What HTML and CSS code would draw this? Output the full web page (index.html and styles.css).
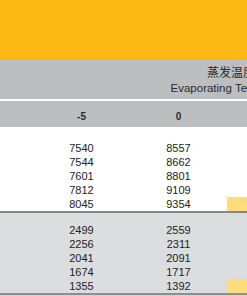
FILE: index.html
```html
<!DOCTYPE html>
<html lang="zh">
<head>
<meta charset="utf-8">
<link rel="stylesheet" href="styles.css">
</head>
<body>
<div class="page">
  <div class="banner"></div>
  <div class="thead">
    <div class="title">
      <div class="zh">蒸发温度</div>
      <div class="en">Evaporating Temperature</div>
    </div>
  </div>
  <div class="grid colhead">
    <span></span><span>-5</span><span>0</span><span></span>
  </div>
  <div class="section sec-white">
    <div class="grid row"><span></span><span>7540</span><span>8557</span><span></span></div>
    <div class="grid row"><span></span><span>7544</span><span>8662</span><span></span></div>
    <div class="grid row"><span></span><span>7601</span><span>8801</span><span></span></div>
    <div class="grid row"><span></span><span>7812</span><span>9109</span><span></span></div>
    <div class="grid row"><span></span><span>8045</span><span>9354</span><span class="hl"></span></div>
  </div>
  <div class="section sec-gray">
    <div class="grid row"><span></span><span>2499</span><span>2559</span><span></span></div>
    <div class="grid row"><span></span><span>2256</span><span>2311</span><span></span></div>
    <div class="grid row"><span></span><span>2041</span><span>2091</span><span></span></div>
    <div class="grid row"><span></span><span>1674</span><span>1717</span><span></span></div>
    <div class="grid row"><span></span><span>1355</span><span>1392</span><span class="hl"></span></div>
  </div>
</div>
</body>
</html>
```
FILE: styles.css
```css
html, body {
  margin: 0;
  padding: 0;
}
body {
  width: 247px;
  height: 296px;
  overflow: hidden;
  background: #d4d4d6;
  font-family: "Liberation Sans", Arial, "Noto Sans CJK SC", sans-serif;
  color: #222;
}
.page {
  width: 470px;
}
.banner {
  height: 60px;
  background: #fdb913;
}
.thead {
  height: 35px;
  padding-top: 4px;
  background: #bdbec0;
  border-bottom: 2px solid #ffffff;
}
.title {
  text-align: center;
  line-height: 16px;
  color: #2a2a2a;
}
.title .zh {
  font-family: "Noto Sans CJK SC", sans-serif;
  font-size: 12px;
  height: 16px;
  padding-right: 8px;
}
.title .en {
  font-size: 11.5px;
  height: 16px;
}
.grid {
  display: grid;
  grid-template-columns: 33px 97px 97px 97px;
}
.grid span {
  text-align: center;
}
.colhead {
  height: 26px;
  box-sizing: border-box;
  padding-top: 8px;
  background: #bdbec0;
  font-size: 10px;
  font-weight: bold;
  line-height: 16px;
  color: #2a2a2a;
}
.section {
  font-size: 11px;
}
.row {
  height: 14px;
  line-height: 14px;
}
.sec-white {
  background: #ffffff;
  padding-top: 14px;
  border-bottom: 2px solid #858587;
}
.sec-gray {
  background: #dcdddf;
  padding-top: 10px;
  border-bottom: 2px solid #8e8e90;
}
.hl {
  background: #fedc7b;
}
```
